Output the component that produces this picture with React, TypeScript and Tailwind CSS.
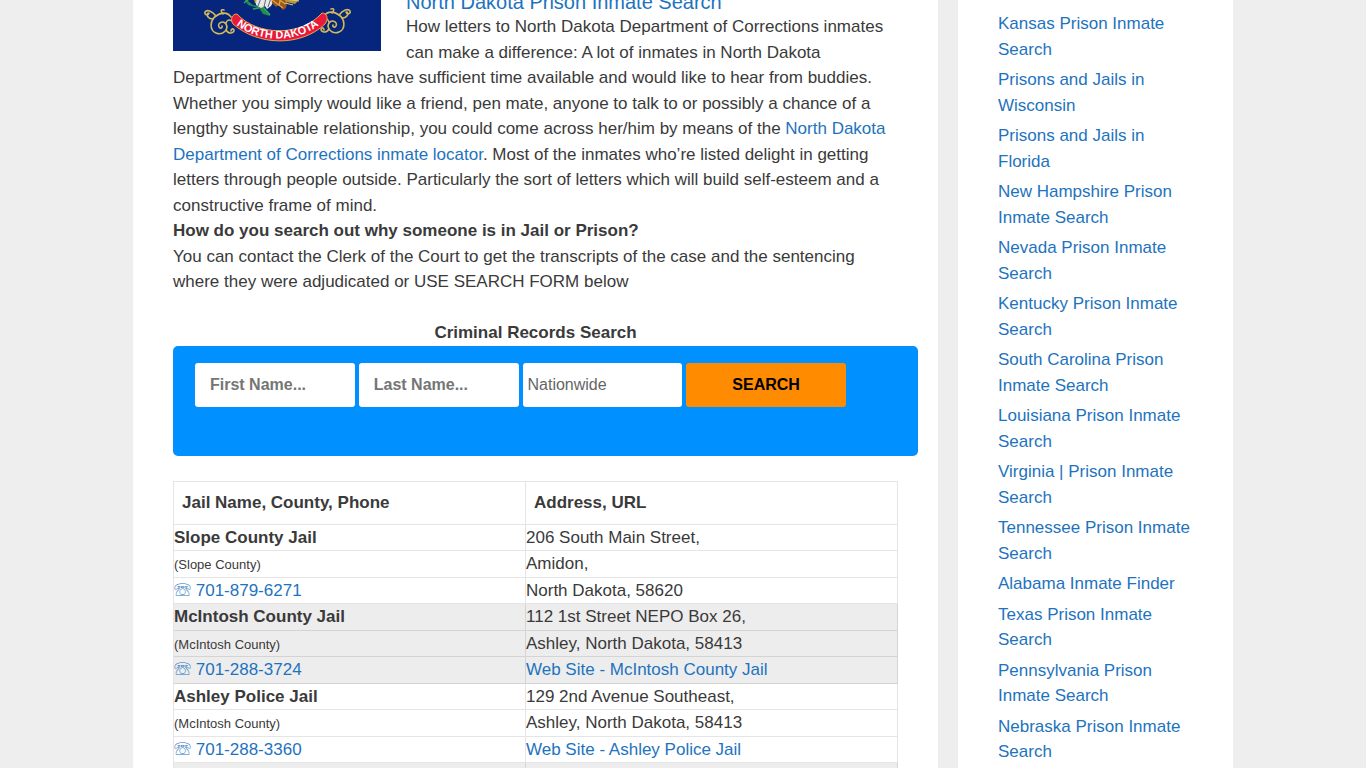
const searchLinks = [
  "Kansas Prison Inmate Search",
  "Prisons and Jails in Wisconsin",
  "Prisons and Jails in Florida",
  "New Hampshire Prison Inmate Search",
  "Nevada Prison Inmate Search",
  "Kentucky Prison Inmate Search",
  "South Carolina Prison Inmate Search",
  "Louisiana Prison Inmate Search",
  "Virginia | Prison Inmate Search",
  "Tennessee Prison Inmate Search",
  "Alabama Inmate Finder",
  "Texas Prison Inmate Search",
  "Pennsylvania Prison Inmate Search",
  "Nebraska Prison Inmate Search",
];

type Jail = {
  name: string;
  county: string;
  phone: string;
  street: string;
  city: string;
  state?: string;
  site?: string;
};

const jails: Jail[] = [
  {
    name: "Slope County Jail",
    county: "(Slope County)",
    phone: "701-879-6271",
    street: "206 South Main Street,",
    city: "Amidon,",
    state: "North Dakota, 58620",
  },
  {
    name: "McIntosh County Jail",
    county: "(McIntosh County)",
    phone: "701-288-3724",
    street: "112 1st Street NEPO Box 26,",
    city: "Ashley, North Dakota, 58413",
    site: "Web Site - McIntosh County Jail",
  },
  {
    name: "Ashley Police Jail",
    county: "(McIntosh County)",
    phone: "701-288-3360",
    street: "129 2nd Avenue Southeast,",
    city: "Ashley, North Dakota, 58413",
    site: "Web Site - Ashley Police Jail",
  },
];

const cell = "border-r border-b border-black/10 p-0 text-left";
const field = "h-11 w-full rounded-[3px] bg-white text-base";

function Scroll() {
  return (
    <g fill="none" stroke="#d2ba5c" strokeWidth="1.6" strokeLinecap="round">
      <path d="M58 130 C54 124 47 126 43 129 C37 133 36 143 43 146 C50 149 56 142 53 137 C50 133 44 136 46 140 C47 142 50 141 49 139" />
      <path d="M43 129 C39 124 34 122 32 125 C31 128 35 129 36 126 M40 132 C35 132 33 128 35 126" />
      <path d="M53 143 C56 148 61 146 61 143 C60 141 58 142 58 144 M50 127 C47 124 48 122 51 123" />
      <path d="M59 134 C56 132 54 133 53 136" />
    </g>
  );
}

function Flag() {
  return (
    <svg
      viewBox="0 0 208 164"
      className="float-left mr-[25px] h-[164px] w-[208px]"
      role="img"
      aria-label="North Dakota flag"
    >
      <rect width="208" height="164" fill="#05267c" />
      {/* Eagle tail, talons, olive branch and arrows */}
      <path d="M70 110 L80 118 L90 120 L97 129 L90 127 L86 121 L75 118 Z" fill="#1f8d4c" />
      <path d="M76 112 L71 116 M82 116 L85 111 L91 115 M86 121 L80 122 M90 120 L97 128" stroke="#35a860" strokeWidth="1.5" fill="none" />
      <path d="M80 111 L86 116 L92 112 L90 118 L83 117 Z" fill="#d8ab32" />
      <path d="M84 105 L105 105 L98 119 L94 122 L92 119 L88 121 L83 118 Z" fill="#e9e8e4" />
      <path d="M88 111 L85 119 M93 111 L91 120 M98 111 L95 120" stroke="#5c657c" strokeWidth="1" />
      <path d="M98 107 L116 107 L113 121 L110 123 L106 118 L103 120 L99 116 Z" fill="#965620" />
      <path d="M99 113 L110 121 M103 110 L112 117 M108 109 L106 119" stroke="#e3a33a" strokeWidth="1.3" />
      <path d="M110 110 L126 113 L122 117 L113 115 Z" fill="#b8963d" />
      <path d="M111 112 L126 114 M112 116 L120 118" stroke="#e5ce70" strokeWidth="1" />
      <Scroll />
      <g transform="matrix(-1 0 0 1 209 -1)">
        <Scroll />
      </g>
      {/* Red ribbon */}
      <path
        d="M64 127 C84 149 128 150 149 126 C154 126 156 132 152 137 C128 160 85 159 60 137 C57 132 59 127 64 127 Z"
        fill="#e9193a"
        stroke="#e7a653"
        strokeWidth="1"
      />
      <path id="ribbon-text" d="M60 135 C83 157 127 157 149 135" fill="none" />
      <text
        fill="#fff"
        fontSize="11"
        fontWeight="bold"
        fontFamily="Liberation Sans, Arial, sans-serif"
        textAnchor="middle"
      >
        <textPath href="#ribbon-text" startOffset="50%">
          NORTH DAKOTA
        </textPath>
      </text>
    </svg>
  );
}

function SearchForm() {
  return (
    <form
      className="-mr-5 grid h-[110px] grid-cols-4 items-start gap-1 rounded-[5px] bg-[#0090ff] py-[17px] pr-[72px] pl-[22px]"
      onSubmit={(e) => e.preventDefault()}
    >
      <input
        type="text"
        aria-label="First Name"
        placeholder="First Name..."
        className={`${field} px-[15px] font-bold placeholder:text-[#757575]`}
      />
      <input
        type="text"
        aria-label="Last Name"
        placeholder="Last Name..."
        className={`${field} px-[15px] font-bold placeholder:text-[#757575]`}
      />
      <select aria-label="State" className={`${field} appearance-none px-[5px] text-[#666]`}>
        <option>Nationwide</option>
      </select>
      <button type="submit" className="h-11 rounded-[3px] bg-[#ff8c00] text-base font-bold text-black">
        SEARCH
      </button>
    </form>
  );
}

function JailRows({ jail, shaded }: { jail: Jail; shaded: boolean }) {
  return (
    <tbody className={shaded ? "bg-[#ededed]" : ""}>
      <tr>
        <td className={`${cell} font-bold`}>{jail.name}</td>
        <td className={cell}>{jail.street}</td>
      </tr>
      <tr>
        <td className={cell}>
          <span className="text-[13px] leading-none">{jail.county}</span>
        </td>
        <td className={cell}>{jail.city}</td>
      </tr>
      <tr>
        <td className={cell}>
          <a href={`tel:${jail.phone}`} className="text-[#1e73be]">
            <span className="font-['Noto_Sans_CJK_JP',sans-serif] leading-none">☏</span> {jail.phone}
          </a>
        </td>
        <td className={cell}>
          {jail.site ? (
            <a href="#" className="text-[#1e73be]">{jail.site}</a>
          ) : (
            jail.state
          )}
        </td>
      </tr>
    </tbody>
  );
}

export default function App() {
  return (
    <div className="h-screen overflow-hidden bg-[#eee] font-['Liberation_Sans',Arial,sans-serif] text-[17px] leading-normal text-[#3a3a3a]">
      <div className="mx-auto flex max-w-[1100px] gap-5">
        {/* Article */}
        <main className="min-w-0 flex-1 bg-white px-10">
          <article className="-mt-[113px]">
            <Flag />
            <h2 className="pt-[103px] text-[20px] leading-6">
              <a href="#" className="text-[#1e73be]">North Dakota Prison Inmate Search</a>
            </h2>
            <p>
              How letters to North Dakota Department of Corrections inmates can make a difference: A lot of
              inmates in North Dakota Department of Corrections have sufficient time available and would like
              to hear from buddies. Whether you simply would like a friend, pen mate, anyone to talk to or
              possibly a chance of a lengthy sustainable relationship, you could come across her/him by means
              of the{" "}
              <a href="#" className="text-[#1e73be]">
                North Dakota Department of Corrections inmate locator
              </a>
              . Most of the inmates who’re listed delight in getting letters through people outside.
              Particularly the sort of letters which will build self-esteem and a constructive frame of mind.
            </p>
            <h3 className="font-bold">How do you search out why someone is in Jail or Prison?</h3>
            <p>
              You can contact the Clerk of the Court to get the transcripts of the case and the sentencing
              where they were adjudicated or USE SEARCH FORM below
            </p>
            <h3 className="mt-[25px] mb-px text-center font-bold">Criminal Records Search</h3>
            <SearchForm />

            <table className="mt-[25px] w-full table-fixed border-separate border-spacing-0 border-t border-l border-black/10">
              <thead>
                <tr>
                  <th className="w-[352px] border-r border-b border-black/10 p-2 text-left">
                    Jail Name, County, Phone
                  </th>
                  <th className="border-r border-b border-black/10 p-2 text-left">Address, URL</th>
                </tr>
              </thead>
              {jails.map((jail, i) => (
                <JailRows key={jail.name} jail={jail} shaded={i % 2 === 1} />
              ))}
              <tbody className="bg-[#ededed]">
                <tr className="h-7">
                  <td className={cell}></td>
                  <td className={cell}></td>
                </tr>
              </tbody>
            </table>
          </article>
        </main>

        {/* Sidebar */}
        <aside className="w-[275px] shrink-0 bg-white px-10 pt-[11px]">
          <ul className="flex flex-col gap-[5px]">
            {searchLinks.map((label) => (
              <li key={label}>
                <a href="#" className="text-[#1e73be]">{label}</a>
              </li>
            ))}
          </ul>
        </aside>
      </div>
    </div>
  );
}
